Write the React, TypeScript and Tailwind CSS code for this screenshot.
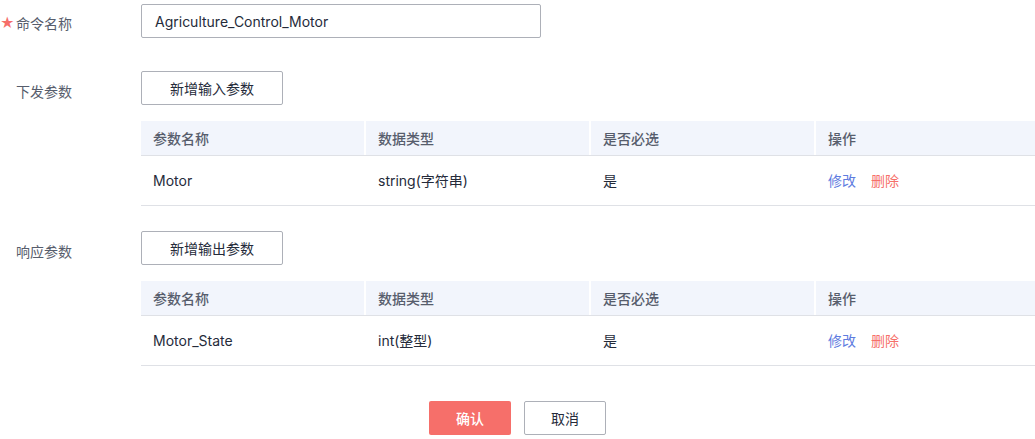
const font = { fontFamily: 'Inter, "Noto Sans CJK SC", sans-serif' }

type Param = { name: string; type: string; required: string }

function ParamTable({ rows }: { rows: Param[] }) {
  const cols = ['参数名称', '数据类型', '是否必选', '操作']
  return (
    <div className="w-full">
      <div className="flex h-[35px] border-b border-[#dfe1e6]">
        {cols.map((c, i) => (
          <div
            key={c}
            className={`flex items-center bg-[#f2f5fc] pl-3 text-[14px] font-medium text-[#575d6c] ${
              i < 3 ? 'w-[225px] border-r-2 border-white' : 'flex-1'
            }`}
          >
            {c}
          </div>
        ))}
      </div>
      {rows.map(r => (
        <div key={r.name} className="flex h-[50px] border-b border-[#dfe1e6] text-[14px] text-[#252b3a]">
          <div className="flex w-[225px] items-center pl-3">{r.name}</div>
          <div className="flex w-[225px] items-center pl-3">{r.type}</div>
          <div className="flex w-[225px] items-center pl-3">{r.required}</div>
          <div className="flex flex-1 items-center gap-[15px] pl-3">
            <span className="cursor-pointer text-[#5e7ce0]">修改</span>
            <span className="cursor-pointer text-[#f66f6a]">删除</span>
          </div>
        </div>
      ))}
    </div>
  )
}

export default function App() {
  return (
    <div className="w-[1035px] h-[439px] overflow-hidden bg-white pt-[4px]" style={font}>
      {/* 命令名称 */}
      <div className="flex">
        <div className="flex w-[141px] items-center pt-[4px] text-[14px] text-[#575d6c]">
          <span className="mr-[5px] w-[11px] text-[14px] leading-none text-[#f66f6a]">★</span>
          命令名称
        </div>
        <div className="flex h-[34px] w-[400px] items-center rounded-[2px] border border-[#adb0b8] px-[13px] text-[14px] text-[#252b3a]">
          Agriculture_Control_Motor
        </div>
      </div>

      {/* 下发参数 */}
      <div className="mt-[33px] flex">
        <div className="w-[141px] pl-[16px] pt-[10px] text-[14px] text-[#575d6c]">下发参数</div>
        <div className="flex-1">
          <button className="h-[34px] w-[142px] rounded-[2px] border border-[#adb0b8] text-[14px] text-[#252b3a]">
            新增输入参数
          </button>
          <div className="mt-[16px]">
            <ParamTable rows={[{ name: 'Motor', type: 'string(字符串)', required: '是' }]} />
          </div>
        </div>
      </div>

      {/* 响应参数 */}
      <div className="mt-[25px] flex">
        <div className="w-[141px] pl-[16px] pt-[10px] text-[14px] text-[#575d6c]">响应参数</div>
        <div className="flex-1">
          <button className="h-[34px] w-[142px] rounded-[2px] border border-[#adb0b8] text-[14px] text-[#252b3a]">
            新增输出参数
          </button>
          <div className="mt-[16px]">
            <ParamTable rows={[{ name: 'Motor_State', type: 'int(整型)', required: '是' }]} />
          </div>
        </div>
      </div>

      <div className="mt-[35px] flex justify-center gap-[13px]">
        <button className="h-[34px] w-[82px] rounded-[2px] bg-[#f66f6a] text-[14px] font-medium text-white">
          确认
        </button>
        <button className="h-[34px] w-[82px] rounded-[2px] border border-[#adb0b8] text-[14px] text-[#252b3a]">
          取消
        </button>
      </div>
    </div>
  )
}
